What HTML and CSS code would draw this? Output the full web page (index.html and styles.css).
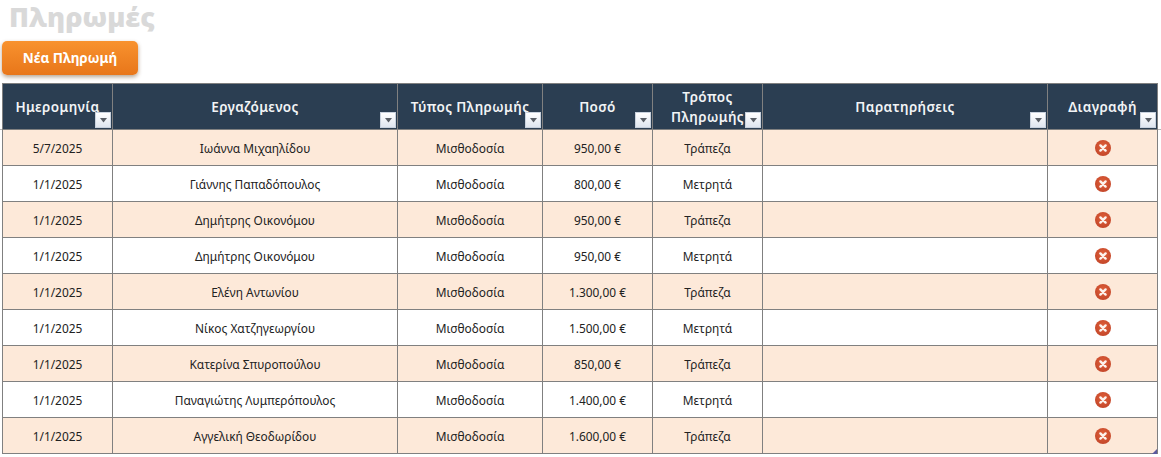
FILE: index.html
```html
<!DOCTYPE html>
<html lang="el">
<head>
  <meta charset="UTF-8" />
  <title>Πληρωμές</title>
  <link rel="stylesheet" href="styles.css">
</head>
<body>
  <svg class="icon-defs" width="0" height="0">
    <defs>
      <radialGradient id="del-fill" cx="50%" cy="40%" r="60%">
        <stop offset="0" stop-color="#e0603a"/>
        <stop offset="1" stop-color="#c4472a"/>
      </radialGradient>
    </defs>
    <symbol id="filter-arrow" viewBox="0 0 9 5"><path d="M1 0h7L4.5 4.5z" fill="#5a5f66"/></symbol>
    <symbol id="delete-icon" viewBox="0 0 16 16">
      <circle cx="8" cy="8" r="8" fill="url(#del-fill)"/>
      <path d="M5.4 5.4l5.2 5.2M10.6 5.4l-5.2 5.2" stroke="#fdf3ee" stroke-width="2.4" stroke-linecap="round"/>
    </symbol>
  </svg>

  <div class="page">
    <h1 class="title">Πληρωμές</h1>
    <button class="btn-new">Νέα Πληρωμή</button>

    <div class="table-wrap">
      <table class="payments">
        <colgroup>
          <col class="c-date"><col class="c-name"><col class="c-type"><col class="c-amount">
          <col class="c-method"><col class="c-notes"><col class="c-del">
        </colgroup>
        <thead>
          <tr>
            <th>Ημερομηνία<span class="filter"><svg><use href="#filter-arrow"/></svg></span></th>
            <th>Εργαζόμενος<span class="filter"><svg><use href="#filter-arrow"/></svg></span></th>
            <th>Τύπος Πληρωμής<span class="filter"><svg><use href="#filter-arrow"/></svg></span></th>
            <th>Ποσό<span class="filter"><svg><use href="#filter-arrow"/></svg></span></th>
            <th>Τρόπος Πληρωμής<span class="filter"><svg><use href="#filter-arrow"/></svg></span></th>
            <th>Παρατηρήσεις<span class="filter"><svg><use href="#filter-arrow"/></svg></span></th>
            <th>Διαγραφή<span class="filter"><svg><use href="#filter-arrow"/></svg></span></th>
          </tr>
        </thead>
        <tbody>
          <tr><td>5/7/2025</td><td>Ιωάννα Μιχαηλίδου</td><td>Μισθοδοσία</td><td>950,00 €</td><td>Τράπεζα</td><td></td><td><svg class="del"><use href="#delete-icon"/></svg></td></tr>
          <tr><td>1/1/2025</td><td>Γιάννης Παπαδόπουλος</td><td>Μισθοδοσία</td><td>800,00 €</td><td>Μετρητά</td><td></td><td><svg class="del"><use href="#delete-icon"/></svg></td></tr>
          <tr><td>1/1/2025</td><td>Δημήτρης Οικονόμου</td><td>Μισθοδοσία</td><td>950,00 €</td><td>Τράπεζα</td><td></td><td><svg class="del"><use href="#delete-icon"/></svg></td></tr>
          <tr><td>1/1/2025</td><td>Δημήτρης Οικονόμου</td><td>Μισθοδοσία</td><td>950,00 €</td><td>Μετρητά</td><td></td><td><svg class="del"><use href="#delete-icon"/></svg></td></tr>
          <tr><td>1/1/2025</td><td>Ελένη Αντωνίου</td><td>Μισθοδοσία</td><td>1.300,00 €</td><td>Τράπεζα</td><td></td><td><svg class="del"><use href="#delete-icon"/></svg></td></tr>
          <tr><td>1/1/2025</td><td>Νίκος Χατζηγεωργίου</td><td>Μισθοδοσία</td><td>1.500,00 €</td><td>Μετρητά</td><td></td><td><svg class="del"><use href="#delete-icon"/></svg></td></tr>
          <tr><td>1/1/2025</td><td>Κατερίνα Σπυροπούλου</td><td>Μισθοδοσία</td><td>850,00 €</td><td>Τράπεζα</td><td></td><td><svg class="del"><use href="#delete-icon"/></svg></td></tr>
          <tr><td>1/1/2025</td><td>Παναγιώτης Λυμπερόπουλος</td><td>Μισθοδοσία</td><td>1.400,00 €</td><td>Μετρητά</td><td></td><td><svg class="del"><use href="#delete-icon"/></svg></td></tr>
          <tr><td>1/1/2025</td><td>Αγγελική Θεοδωρίδου</td><td>Μισθοδοσία</td><td>1.600,00 €</td><td>Τράπεζα</td><td></td><td><svg class="del"><use href="#delete-icon"/></svg></td></tr>
        </tbody>
      </table>
      <span class="resize-handle"></span>
    </div>
  </div>
</body>
</html>
```

FILE: styles.css
```css
* { margin: 0; padding: 0; box-sizing: border-box; }
html, body { height: 100%; overflow: hidden; }
body { background: #fff; font-family: "Noto Sans", "Open Sans", sans-serif; color: #222; }

.icon-defs { position: absolute; }

.title {
  font-family: "Open Sans", "Noto Sans", sans-serif;
  font-size: 27px;
  font-weight: 800;
  line-height: 34px;
  color: #d9d9d9;
  padding-left: 9px;
  margin-bottom: 7px;
}

.btn-new {
  display: block;
  width: 136px;
  height: 34px;
  margin-left: 2px;
  border: none;
  border-radius: 5px;
  background: linear-gradient(#f8922e, #e8761a);
  box-shadow: 0 2px 4px rgba(90, 50, 10, 0.45);
  color: #fff;
  font-family: inherit;
  font-size: 13.5px;
  font-weight: 700;
}

.table-wrap {
  position: relative;
  width: 1156px;
  margin: 8px 0 0 2px;
}

/* sheet gridline showing past the table edge */
.table-wrap::before {
  content: "";
  position: absolute;
  left: -2px;
  right: -3px;
  top: 46px;
  height: 1px;
  background: #b5b5b5;
  z-index: -1;
}

.payments {
  width: 1155px;
  table-layout: fixed;
  border-collapse: collapse;
  font-size: 11.9px;
}

.c-date { width: 110px; }
.c-name { width: 285px; }
.c-type { width: 145px; }
.c-amount { width: 110px; }
.c-method { width: 110px; }
.c-notes { width: 285px; }
.c-del { width: 110px; }

.payments th, .payments td {
  border: 1px solid #808080;
  text-align: center;
  vertical-align: middle;
}

.payments th {
  position: relative;
  height: 46px;
  background: #2b3e52;
  color: #f2f4f6;
  font-size: 13.5px;
  font-weight: 600;
  line-height: 20px;
  letter-spacing: 0.4px;
}

.payments td { height: 36px; }
.payments tbody tr:nth-child(odd) td { background: #fde9d9; }

.filter {
  position: absolute;
  right: 1px;
  bottom: 1px;
  width: 16px;
  height: 16px;
  display: flex;
  align-items: center;
  justify-content: center;
  background: linear-gradient(#fff, #dfe6f0);
  border: 1px solid #c9d2de;
}

.filter svg { width: 9px; height: 5px; }

.del { display: block; width: 16px; height: 16px; margin: 0 auto; }

.resize-handle {
  position: absolute;
  right: 1px;
  bottom: 0;
  width: 0;
  height: 0;
  border-left: 5px solid transparent;
  border-bottom: 5px solid #5b5a9e;
}
```
